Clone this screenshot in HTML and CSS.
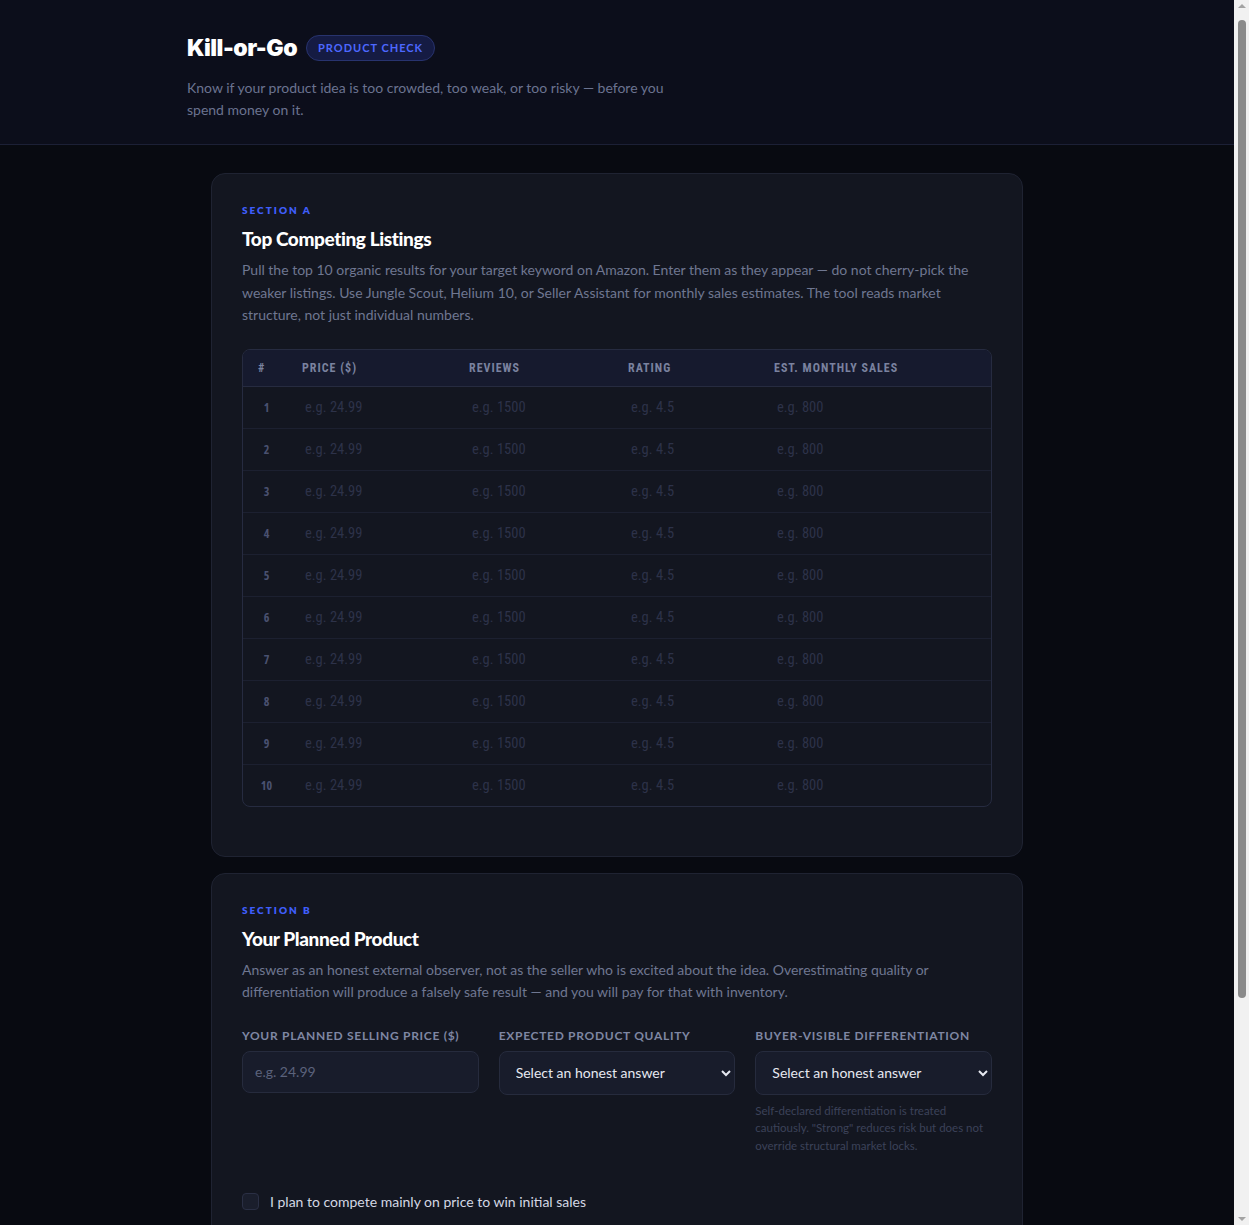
FILE: index.html
```html
<!DOCTYPE html>
<html lang="en">

<head>
    <meta charset="UTF-8">
    <meta name="viewport" content="width=device-width, initial-scale=1.0">
    <title>Kill-or-Go — Product Check</title>
    <link rel="stylesheet" href="styles.css">
</head>

<body>
    <header class="top">
        <div class="top-inner">
            <div class="brand">
                <h1>Kill-or-Go</h1>
                <span class="badge">Product check</span>
            </div>
            <p class="tagline">Know if your product idea is too crowded, too weak, or too risky — before you spend money on it.</p>
        </div>
    </header>

    <main class="page">
        <section class="card">
            <div class="section-label">Section A</div>
            <h2>Top Competing Listings</h2>
            <p class="desc">Pull the top 10 organic results for your target keyword on Amazon. Enter them as they appear — do not cherry-pick the weaker listings. Use Jungle Scout, Helium 10, or Seller Assistant for monthly sales estimates. The tool reads market structure, not just individual numbers.</p>

            <div class="listings">
                <div class="row head">
                    <div class="cell num">#</div>
                    <div class="cell">Price ($)</div>
                    <div class="cell">Reviews</div>
                    <div class="cell">Rating</div>
                    <div class="cell">Est. monthly sales</div>
                </div>
                <div id="rows"></div>
            </div>
        </section>

        <section class="card">
            <div class="section-label">Section B</div>
            <h2>Your Planned Product</h2>
            <p class="desc">Answer as an honest external observer, not as the seller who is excited about the idea. Overestimating quality or differentiation will produce a falsely safe result — and you will pay for that with inventory.</p>

            <div class="fields">
                <div class="field">
                    <label for="price">Your planned selling price ($)</label>
                    <input type="text" id="price" placeholder="e.g. 24.99">
                </div>
                <div class="field">
                    <label for="quality">Expected product quality</label>
                    <select id="quality">
                        <option>Select an honest answer</option>
                        <option>Below average</option>
                        <option>On par with top listings</option>
                        <option>Clearly better</option>
                    </select>
                </div>
                <div class="field">
                    <label for="diff">Buyer-visible differentiation</label>
                    <select id="diff">
                        <option>Select an honest answer</option>
                        <option>None</option>
                        <option>Weak</option>
                        <option>Strong</option>
                    </select>
                    <p class="hint">Self-declared differentiation is treated cautiously. "Strong" reduces risk but does not override structural market locks.</p>
                </div>
            </div>

            <label class="check"><input type="checkbox"><span>I plan to compete mainly on price to win initial sales</span></label>
            <label class="check"><input type="checkbox"><span>My product needs certification or compliance testing before launch</span></label>
        </section>

        <button class="run" type="button">Run the check</button>
        <p class="foot">Results are calculated in your browser. Nothing is sent anywhere.</p>
    </main>

    <!-- browser scrollbar as it shows in the screenshot -->
    <div class="scrollbar" aria-hidden="true">
        <span class="arrow up"></span>
        <span class="thumb"></span>
        <span class="arrow down"></span>
    </div>

    <script>
        const rows = document.getElementById('rows');
        for (let i = 1; i <= 10; i++) {
            rows.insertAdjacentHTML('beforeend', `
                <div class="row">
                    <div class="cell num">${i}</div>
                    <div class="cell"><input type="text" placeholder="e.g. 24.99"></div>
                    <div class="cell"><input type="text" placeholder="e.g. 1500"></div>
                    <div class="cell"><input type="text" placeholder="e.g. 4.5"></div>
                    <div class="cell"><input type="text" placeholder="e.g. 800"></div>
                </div>`);
        }
    </script>
</body>

</html>
```

FILE: styles.css
```css
* {
    box-sizing: border-box;
}

body {
    margin: 0;
    margin-right: 15px;
    background: #080a11;
    color: #e4e7f0;
    font-family: Lato, "Open Sans", sans-serif;
    font-size: 14px;
}

.top {
    background: #0c0e1b;
    border-bottom: 1px solid #1c2036;
    padding: 35px 0 23px;
}

.top-inner {
    max-width: 860px;
    margin: 0 auto;
}

.brand {
    display: flex;
    align-items: center;
    gap: 9px;
    height: 26px;
}

.brand h1 {
    margin: 0;
    font-family: Inter, Lato, sans-serif;
    font-size: 23px;
    font-weight: 900;
    color: #fff;
    letter-spacing: -0.5px;
}

.badge {
    display: inline-block;
    padding: 0 11px;
    height: 26px;
    line-height: 24px;
    border: 1px solid #28336e;
    border-radius: 13px;
    background: #151b43;
    color: #4d68ff;
    font-size: 11px;
    font-weight: 700;
    letter-spacing: 1px;
    text-transform: uppercase;
}

.tagline {
    margin: 16px 0 0;
    max-width: 510px;
    line-height: 22px;
    color: #6b7390;
}

.page {
    max-width: 860px;
    margin: 0 auto;
    padding: 28px 24px 110px;
}

.card {
    background: #131620;
    border: 1px solid #1f2332;
    border-radius: 14px;
    padding: 29px 30px 30px;
    margin-bottom: 16px;
}

.section-label {
    font-size: 10px;
    font-weight: 800;
    letter-spacing: 2px;
    text-transform: uppercase;
    color: #3f5efb;
    line-height: 14px;
}

.card h2 {
    margin: 10px 0 8px;
    font-size: 19px;
    line-height: 24px;
    font-weight: 900;
    color: #fff;
    letter-spacing: -0.4px;
}

.desc {
    margin: 0 0 22px;
    line-height: 22.5px;
    color: #6f7791;
}

.listings {
    border: 1px solid #262b40;
    border-radius: 8px;
    overflow: hidden;
    margin-bottom: 19px;
}

.row {
    display: grid;
    grid-template-columns: 47px 167px 159px 146px 1fr;
    align-items: center;
    height: 42px;
    border-top: 1px solid #1c2030;
}

.row.head {
    height: 37px;
    border-top: none;
    border-bottom: 1px solid #262b40;
    background: #161a2e;
    font-family: "Roboto Condensed", "Liberation Sans Narrow", "Open Sans", sans-serif;
    font-stretch: condensed;
    font-size: 12px;
    font-weight: 700;
    letter-spacing: 1px;
    text-transform: uppercase;
    color: #7a829f;
}

#rows .row:first-child {
    border-top: none;
    height: 41px;
}

.cell {
    padding: 0 12px;
}

.head .num {
    padding-left: 15px;
}

#rows .num {
    text-align: center;
    font-family: "Open Sans", sans-serif;
    font-stretch: condensed;
    font-size: 12px;
    font-weight: 700;
    color: #4a5170;
    padding: 0;
}

.cell input {
    width: 100%;
    background: transparent;
    border: none;
    outline: none;
    padding: 0 3px;
    color: #e4e7f0;
    font-family: "Roboto Condensed", "Liberation Sans Narrow", "Open Sans", sans-serif;
    font-stretch: condensed;
    font-size: 14.5px;
}

.cell input::placeholder {
    color: #2d3249;
}

.fields {
    display: grid;
    grid-template-columns: repeat(3, 1fr);
    gap: 20px;
    margin-top: 24px;
    align-items: start;
}

.field label {
    display: block;
    margin-bottom: 8px;
    font-size: 12px;
    font-weight: 700;
    letter-spacing: 0.7px;
    text-transform: uppercase;
    color: #7f87a3;
}

.field input,
.field select {
    width: 100%;
    background: #181c2b;
    border: 1px solid #262b3d;
    border-radius: 8px;
    color: #e6e8f0;
    font-family: inherit;
    font-size: 14px;
}

.field input {
    height: 42px;
    padding: 0 12px;
}

.field input::placeholder {
    color: #5b627c;
}

.field select {
    height: 44px;
    padding: 0 12px;
    color-scheme: dark;
}

.hint {
    margin: 7px 0 0;
    font-size: 11.5px;
    line-height: 17.5px;
    color: #3c4259;
}

.check {
    display: flex;
    align-items: center;
    gap: 11px;
    margin-top: 16px;
    color: #d4d8e4;
}

.card .check:first-of-type {
    margin-top: 39px;
}

.check input {
    appearance: none;
    margin: 0;
    width: 17px;
    height: 17px;
    border: 1px solid #2a2f44;
    border-radius: 4px;
    background: #1a1e2c;
}

.run {
    display: block;
    width: 100%;
    height: 52px;
    margin-top: 24px;
    border: none;
    border-radius: 10px;
    background: #3f5efb;
    color: #fff;
    font-family: inherit;
    font-size: 15px;
    font-weight: 700;
    cursor: pointer;
}

.foot {
    text-align: center;
    color: #4a5170;
    font-size: 12px;
    margin: 16px 0 0;
}

.scrollbar {
    position: fixed;
    top: 0;
    right: 0;
    width: 15px;
    height: 100%;
    background: #f1f1f1;
}

.thumb {
    position: absolute;
    left: 4px;
    top: 20px;
    width: 8px;
    height: 978px;
    border-radius: 4px;
    background: #8a8a8a;
}

.arrow {
    position: absolute;
    left: 4px;
    width: 0;
    height: 0;
    border-left: 4px solid transparent;
    border-right: 4px solid transparent;
}

.arrow.up {
    top: 4px;
    border-bottom: 4px solid #a3a3a3;
}

.arrow.down {
    bottom: 4px;
    border-top: 4px solid #a3a3a3;
}
```
